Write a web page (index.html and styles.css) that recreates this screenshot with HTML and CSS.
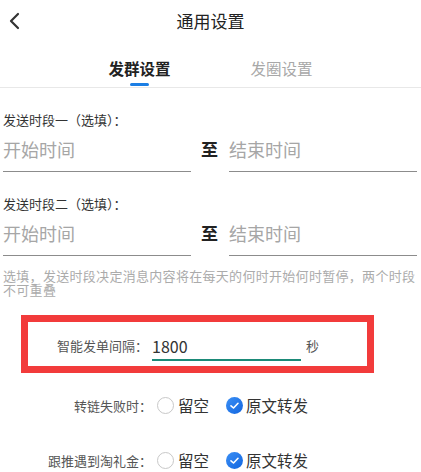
FILE: index.html
```
<!DOCTYPE html>
<html lang="zh-CN">

<head>
    <meta charset="UTF-8">
    <meta name="viewport" content="width=device-width, initial-scale=1.0">
    <title>通用设置</title>
    <link rel="stylesheet" href="styles.css">
</head>

<body>
    <div class="page">
        <div class="nav">
            <svg class="back" width="14" height="18" viewBox="0 0 14 18">
                <path d="M11 2 L4 9 L11 16" fill="none" stroke="#333" stroke-width="2.2" stroke-linecap="round" stroke-linejoin="round" />
            </svg>
            <h1>通用设置</h1>
        </div>

        <div class="tabs">
            <div class="tab active">
                <span>发群设置</span>
                <i class="tab-bar"></i>
            </div>
            <div class="tab">
                <span>发圈设置</span>
            </div>
        </div>

        <div class="form">
            <div class="period">
                <div class="period-label">发送时段一（选填）：</div>
                <div class="period-row">
                    <div class="time-field">开始时间</div>
                    <span class="to">至</span>
                    <div class="time-field">结束时间</div>
                </div>
            </div>

            <div class="period">
                <div class="period-label">发送时段二（选填）：</div>
                <div class="period-row">
                    <div class="time-field">开始时间</div>
                    <span class="to">至</span>
                    <div class="time-field">结束时间</div>
                </div>
            </div>

            <p class="hint">选填，发送时段决定消息内容将在每天的何时开始何时暂停，两个时段不可重叠</p>
        </div>

        <div class="interval-box">
            <span class="interval-label">智能发单间隔：</span>
            <div class="interval-input">1800</div>
            <span class="unit">秒</span>
        </div>

        <div class="radio-row first">
            <span class="radio-label">转链失败时：</span>
            <span class="radio"></span>
            <span class="radio-text">留空</span>
            <span class="radio checked">
                <svg width="17" height="17" viewBox="0 0 17 17">
                    <path d="M5 8.8 L7.5 11 L12 6.3" fill="none" stroke="#fff" stroke-width="1.6" stroke-linecap="round" stroke-linejoin="round" />
                </svg>
            </span>
            <span class="radio-text">原文转发</span>
        </div>

        <div class="radio-row">
            <span class="radio-label">跟推遇到淘礼金：</span>
            <span class="radio"></span>
            <span class="radio-text">留空</span>
            <span class="radio checked">
                <svg width="17" height="17" viewBox="0 0 17 17">
                    <path d="M5 8.8 L7.5 11 L12 6.3" fill="none" stroke="#fff" stroke-width="1.6" stroke-linecap="round" stroke-linejoin="round" />
                </svg>
            </span>
            <span class="radio-text">原文转发</span>
        </div>
    </div>
</body>

</html>
```

FILE: styles.css
```
* {
    margin: 0;
    padding: 0;
    box-sizing: border-box;
}

body {
    font-family: "Noto Sans CJK SC", "Noto Sans", sans-serif;
    background: #fff;
    color: #333;
}

.page {
    width: 421px;
    height: 472px;
    overflow: hidden;
}

/* 顶部导航 */
.nav {
    height: 42px;
    display: flex;
    align-items: center;
    justify-content: center;
    position: relative;
}

.back {
    position: absolute;
    left: 7px;
    top: 12px;
}

.nav h1 {
    font-size: 17px;
    font-weight: 400;
    color: #222;
    line-height: 20px;
    margin-top: 0;
}

/* 标签页 */
.tabs {
    height: 46px;
    display: flex;
    justify-content: center;
    border-bottom: 1px solid #e8e8e8;
}

.tab {
    width: 142px;
    display: flex;
    flex-direction: column;
    align-items: center;
    padding-top: 16px;
    font-size: 15.5px;
    line-height: 20px;
    color: #a8a8a8;
}

.tab.active {
    color: #222;
    font-weight: 700;
}

.tab-bar {
    width: 19px;
    height: 3px;
    margin-top: 5px;
    border-radius: 2px;
    background: #1b7ee4;
}

/* 时段 */
.form {
    padding: 0 3px;
}

.period {
    margin-top: 23px;
}

.period-label {
    font-size: 13px;
    line-height: 18px;
    color: #333;
}

.period-row {
    display: flex;
    align-items: flex-start;
    margin-top: 8px;
}

.time-field {
    width: 188px;
    font-size: 18px;
    line-height: 24px;
    color: #a6a6a6;
    padding-bottom: 10px;
    border-bottom: 1px solid #8c8c8c;
}

.to {
    width: 38px;
    padding-left: 10px;
    font-size: 17px;
    line-height: 24px;
    font-weight: 700;
    color: #222;
}

.hint {
    margin-top: 13px;
    font-size: 13px;
    line-height: 14px;
    letter-spacing: 0.3px;
    color: #ababab;
}

/* 间隔 */
.interval-box {
    margin: 18px 0 0 21px;
    width: 353px;
    height: 58px;
    border: 7px solid #f23b3b;
    display: flex;
    align-items: flex-start;
    padding: 14px 0 0 29px;
}

.interval-label {
    width: 95px;
    font-size: 13px;
    line-height: 20px;
    color: #555;
}

.interval-input {
    width: 149px;
    font-size: 16px;
    line-height: 20px;
    color: #333;
    padding-bottom: 3px;
    border-bottom: 2px solid #1b8a78;
}

.unit {
    margin-left: 5px;
    font-size: 13px;
    line-height: 20px;
    color: #555;
}

/* 单选 */
.radio-row {
    display: flex;
    align-items: center;
    height: 24px;
    margin-top: 31px;
}

.radio-row.first {
    margin-top: 20px;
}

.radio-label {
    width: 152px;
    margin-right: 5px;
    text-align: right;
    font-size: 13px;
    color: #555;
}

.radio {
    width: 17px;
    height: 17px;
    border-radius: 50%;
    border: 1px solid #c8c8c8;
    display: flex;
}

.radio.checked {
    border: none;
    background: linear-gradient(135deg, #3b8ff5 0%, #1266e0 100%);
    margin-left: 17px;
}

.radio-text {
    margin-left: 4px;
    font-size: 15.5px;
    color: #333;
}

.radio.checked+.radio-text {
    margin-left: 3px;
}
```
